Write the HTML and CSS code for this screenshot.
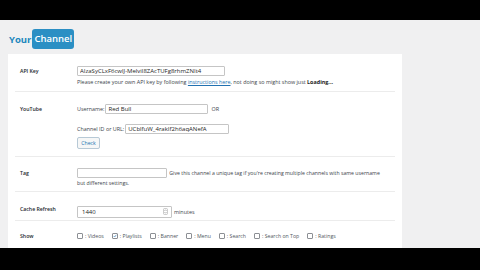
FILE: index.html
```html
<!DOCTYPE html>
<html>
<head>
<meta charset="utf-8">
<link rel="stylesheet" href="styles.css">
</head>
<body>
<div class="topbar"></div>
<div class="main">
  <div class="head">
    <span class="your">Your</span><span class="badge">Channel</span>
  </div>
  <div class="content">
    <div class="panel">
      <div class="row r1">
        <div class="label">API Key</div>
        <div class="field">
          <input class="txt api" type="text" value="AIzaSyCLxF6cwlJ-Melvil8ZAcTUFg8rhmZNIt4">
          <div class="help">Please create your own API key by following <a href="#">instructions here</a>, not doing so might show just <b>Loading...</b></div>
        </div>
      </div>
      <div class="row r2">
        <div class="label">YouTube</div>
        <div class="field">
          <div class="line"><span class="sub">Username:</span><input class="txt user" type="text" value="Red Bull"><span class="or">OR</span></div>
          <div class="line l2"><span class="sub">Channel ID or URL:</span><input class="txt chan" type="text" value="UCblfuW_4rakIf2h6aqANefA"></div>
          <button class="btn">Check</button>
        </div>
      </div>
      <div class="row r3">
        <div class="label">Tag</div>
        <div class="field tagfield"><input class="txt tag" type="text"> Give this channel a unique tag if you're creating multiple channels with same username but different settings.</div>
      </div>
      <div class="row r4">
        <div class="label">Cache Refresh</div>
        <div class="field line">
          <div class="numbox"><span>1440</span><span class="spin"><svg width="5" height="7" viewBox="0 0 5 7"><rect x="0.5" y="0.5" width="4" height="6" rx="1" fill="#fff" stroke="#aaa" stroke-width="0.6"/><path d="M1.5 2.8 L2.5 1.8 L3.5 2.8 M1.5 4.2 L2.5 5.2 L3.5 4.2" fill="none" stroke="#777" stroke-width="0.6"/></svg></span></div>
          <span class="unit">minutes</span>
        </div>
      </div>
      <div class="row r5">
        <div class="label">Show</div>
        <div class="field checks">
          <span class="chk"><span class="box"></span>: Videos</span>
          <span class="chk"><span class="box on"><svg width="6" height="6" viewBox="0 0 6 6"><path d="M1 3 L2.5 4.5 L5 1.2" fill="none" stroke="#2271b1" stroke-width="0.9"/></svg></span>: Playlists</span>
          <span class="chk"><span class="box"></span>: Banner</span>
          <span class="chk"><span class="box"></span>: Menu</span>
          <span class="chk"><span class="box"></span>: Search</span>
          <span class="chk"><span class="box"></span>: Search on Top</span>
          <span class="chk"><span class="box"></span>: Ratings</span>
        </div>
      </div>
    </div>
  </div>
</div>
<div class="bottombar"></div>
</body>
</html>
```
FILE: styles.css
```css
* { box-sizing: border-box; }
html, body { margin: 0; padding: 0; }
body {
  width: 480px;
  height: 270px;
  overflow: hidden;
  background: #f0f0f1;
  font-family: "Open Sans", "DejaVu Sans", sans-serif;
  color: #3c434a;
  font-size: 5.4px;
}
.topbar { height: 20px; background: #000; }
.bottombar { height: 22px; background: #000; }
.main { height: 228px; overflow: hidden; display: flex; flex-direction: column; }
.head {
  height: 34px;
  display: flex;
  align-items: center;
  padding-left: 9px;
  padding-top: 4px;
  font-weight: 700;
  font-size: 9.5px;
}
.your { color: #1d87bd; }
.badge {
  background: #2b8fc4;
  color: #fff;
  border-radius: 3px;
  padding: 3px 2px 4px 2px;
  margin-left: 1px;
  font-weight: 600;
}
.content { flex: 1; display: flex; padding-left: 8px; }
.panel {
  width: 394px;
  background: #fff;
  padding: 0 7px;
}
.row {
  display: flex;
  border-bottom: 1px solid #ececec;
}
.label {
  width: 62px;
  padding-left: 5px;
  font-weight: 600;
  color: #23282d;
  font-size: 5.2px;
  line-height: 10px;
}
.field { flex: 1; }
.txt {
  display: inline-block;
  height: 10px;
  border: 1px solid #c5c5c5;
  border-radius: 1px;
  font-family: "Open Sans", "DejaVu Sans", sans-serif;
  font-size: 6px;
  color: #1e1e1e;
  padding: 0 2px;
  margin: 0;
  outline: none;
  vertical-align: middle;
}
.r1 { padding: 12px 0 6px; height: 38px; }
.api { width: 148px; }
.help { margin-top: 2px; line-height: 8px; }
.help a { color: #2271b1; }
.help b { color: #1e1e1e; }
.r2 { padding-top: 12px; height: 65px; }
.line { display: flex; align-items: center; }
.sub { margin-right: 1px; }
.user { width: 103px; }
.or { margin-left: 3px; }
.l2 { margin-top: 10px; }
.chan { width: 104px; }
.btn {
  margin-top: 3px;
  height: 12px;
  width: 23px;
  padding: 0;
  font-family: "Open Sans", "DejaVu Sans", sans-serif;
  font-size: 5.2px;
  color: #2271b1;
  background: #f6f7f7;
  border: 1px solid #b7c9d6;
  border-radius: 2px;
}
.r3 { padding-top: 11px; height: 35px; }
.tagfield { line-height: 10px; font-size: 5.2px; padding-right: 8px; }
.tag { width: 90px; margin-right: 1px; vertical-align: top; }
.r4 { padding-top: 11px; height: 29px; }
.r4 .label { line-height: 12px; }
.numbox {
  width: 95px;
  height: 12px;
  border: 1px solid #c5c5c5;
  border-radius: 1px;
  display: flex;
  align-items: center;
  justify-content: space-between;
  padding: 0 3px 0 4px;
  font-size: 6px;
  color: #1e1e1e;
}
.spin { display: flex; }
.unit { margin-left: 2px; }
.r5 { padding-top: 10px; border-bottom: none; }
.checks { display: flex; align-items: center; height: 10px; color: #50575e; font-size: 5.2px; }
.chk { display: flex; align-items: center; margin-right: 8px; }
.box {
  width: 6px;
  height: 6px;
  border: 1px solid #8c8f94;
  border-radius: 1px;
  margin-right: 2px;
  display: flex;
  align-items: center;
  justify-content: center;
}
```
